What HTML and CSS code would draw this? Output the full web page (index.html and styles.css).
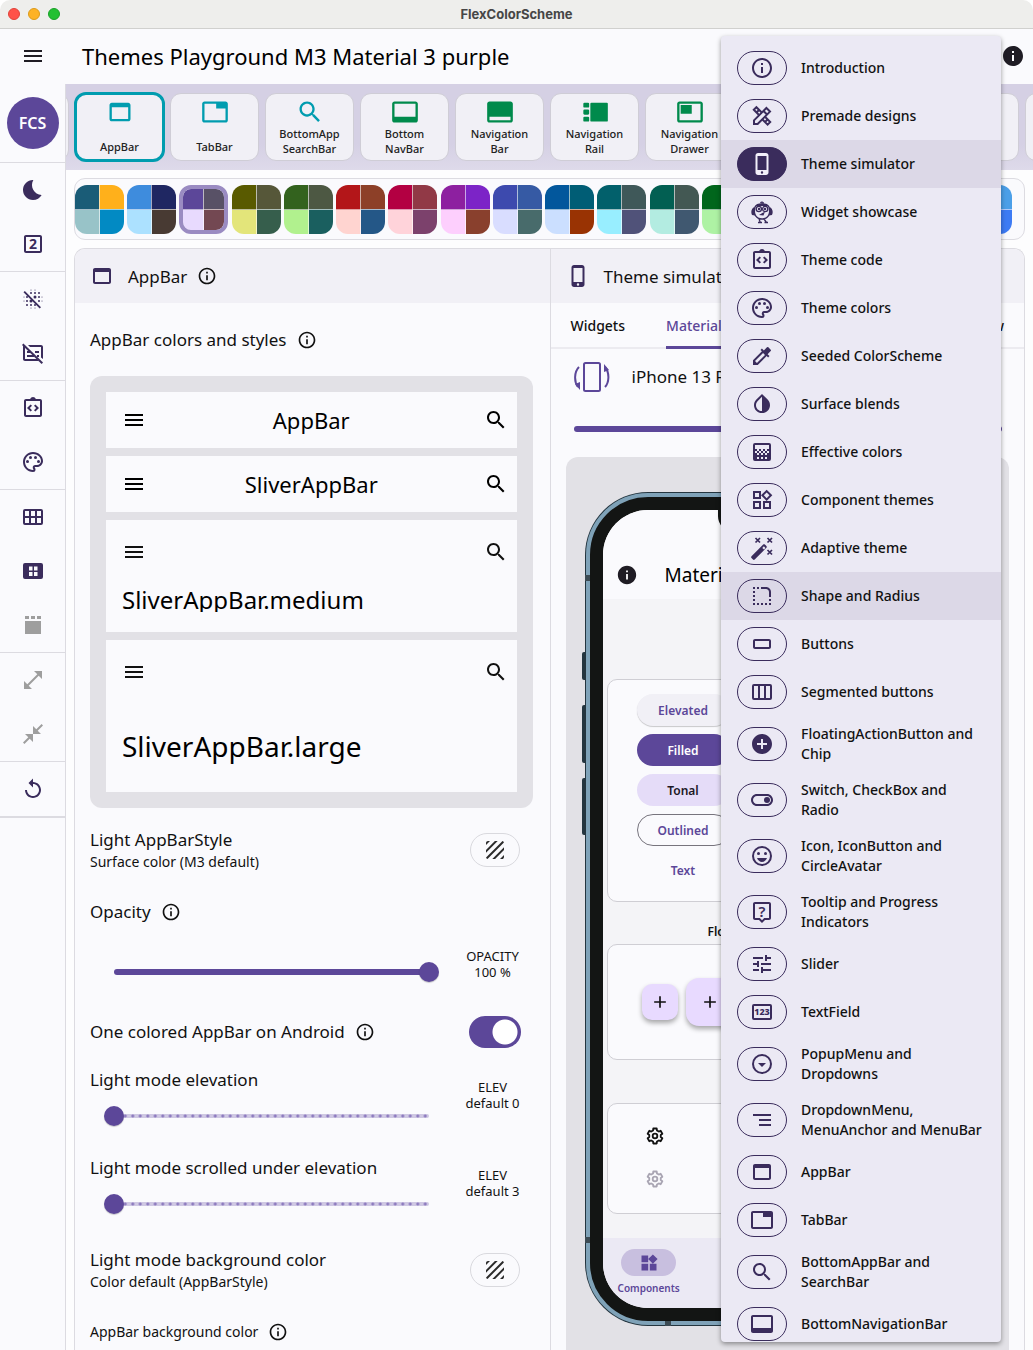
FILE: index.html
```html
<!DOCTYPE html>
<html lang="en">
<head>
<meta charset="utf-8">
<title>FlexColorScheme</title>
<meta name="viewport" content="width=device-width, initial-scale=1">
<link rel="stylesheet" href="styles.css">
</head>
<body>
<svg class="sprite" aria-hidden="true">
  <symbol id="menu" viewBox="0 0 24 24"><path d="M3 18h18v-2H3v2zm0-5h18v-2H3v2zm0-7v2h18V6H3z"/></symbol>
  <symbol id="info" viewBox="0 0 24 24"><path d="M11 7h2v2h-2zm0 4h2v6h-2zm1-9C6.48 2 2 6.48 2 12s4.48 10 10 10 10-4.48 10-10S17.520 2 12 2zm0 18c-4.410 0-8-3.590-8-8s3.590-8 8-8 8 3.590 8 8-3.590 8-8 8z"/></symbol>
  <symbol id="info-fill" viewBox="0 0 24 24"><path d="M12 2C6.480 2 2 6.480 2 12s4.480 10 10 10 10-4.480 10-10S17.520 2 12 2zm1 15h-2v-6h2v6zm0-8h-2V7h2v2z"/></symbol>
  <symbol id="search" viewBox="0 0 24 24"><path d="M15.500 14h-.79l-.28-.27C15.410 12.590 16 11.110 16 9.500 16 5.910 13.090 3 9.500 3S3 5.910 3 9.500 5.910 16 9.500 16c1.610 0 3.090-.59 4.230-1.570l.27.28v.79l5 4.990L20.490 19l-4.990-5zm-6 0C7.010 14 5 11.990 5 9.500S7.010 5 9.500 5 14 7.010 14 9.500 11.990 14 9.500 14z"/></symbol>
  <symbol id="window" viewBox="0 0 24 24"><path d="M19 4H5c-1.110 0-2 .9-2 2v12c0 1.100.89 2 2 2h14c1.100 0 2-.9 2-2V6c0-1.100-.89-2-2-2zm0 14H5V8h14v10z"/></symbol>
  <symbol id="tab" viewBox="0 0 24 24"><path d="M21 3H3c-1.100 0-2 .9-2 2v14c0 1.100.9 2 2 2h18c1.100 0 2-.9 2-2V5c0-1.100-.9-2-2-2zm0 16H3V5h10v4h8v10z"/></symbol>
  <symbol id="bottomnav" viewBox="0 0 24 24"><path d="M21 3H3c-1.100 0-2 .9-2 2v14c0 1.100.9 2 2 2h18c1.100 0 2-.9 2-2V5c0-1.100-.9-2-2-2zm0 13H3V5h18v11z"/></symbol>
  <symbol id="navbar" viewBox="0 0 24 24"><path d="M21 3H3c-1.100 0-2 .9-2 2v14c0 1.100.9 2 2 2h18c1.100 0 2-.9 2-2V5c0-1.100-.9-2-2-2zm0 16H3v-3h18v3z"/></symbol>
  <symbol id="rail" viewBox="0 0 24 24"><rect x="2" y="4" width="5" height="4.200" rx="1"/><rect x="2" y="9.900" width="5" height="4.400" rx="1"/><rect x="2" y="16" width="5" height="4.200" rx="1"/><rect x="8" y="4" width="15" height="16.200" rx="1"/></symbol>
  <symbol id="drawer" viewBox="0 0 24 24"><path d="M21 3H3c-1.100 0-2 .9-2 2v14c0 1.100.9 2 2 2h18c1.100 0 2-.9 2-2V5c0-1.100-.9-2-2-2zm0 16H3V5h18v14z"/><path d="M4 6h9.500v7.500H4z"/></symbol>
  <symbol id="moon" viewBox="0 0 24 24"><path d="M12.340 2.020C6.590 1.820 2 6.420 2 12c0 5.520 4.480 10 10 10 3.710 0 6.930-2.020 8.660-5.020-7.510-.25-12.090-8.430-8.320-14.960z"/></symbol>
  <symbol id="two" viewBox="0 0 24 24"><path d="M19 3H5c-1.100 0-2 .9-2 2v14c0 1.100.9 2 2 2h14c1.100 0 2-.9 2-2V5c0-1.100-.9-2-2-2zm0 16H5V5h14v14z"/><text x="12" y="17" text-anchor="middle" font-size="14" font-weight="700">2</text></symbol>
  <symbol id="blur-off" viewBox="0 0 24 24"><g><circle cx="14" cy="6" r="1"/><circle cx="10" cy="6" r="1"/><circle cx="18" cy="6" r="1"/><circle cx="14" cy="10" r="1.500"/><circle cx="18" cy="10" r="1"/><circle cx="6" cy="10" r="1"/><circle cx="18" cy="14" r="1"/><circle cx="6" cy="14" r="1"/><circle cx="10" cy="14" r="1.500"/><circle cx="6" cy="18" r="1"/><circle cx="10" cy="18" r="1"/><circle cx="14" cy="18" r="1"/><circle cx="10" cy="3" r=".5"/><circle cx="14" cy="3" r=".5"/><circle cx="10" cy="21" r=".5"/><circle cx="14" cy="21" r=".5"/><circle cx="3" cy="10" r=".5"/><circle cx="3" cy="14" r=".5"/><circle cx="21" cy="10" r=".5"/><circle cx="21" cy="14" r=".5"/></g><path d="M2.500 5.300 3.800 4 20 20.200l-1.300 1.300z"/></symbol>
  <symbol id="subtitles-off" viewBox="0 0 24 24"><path d="M7 4h13c1.100 0 2 .9 2 2v12l-2-1.500V6H9zM4 6v12h12l2 2H4c-1.100 0-2-.9-2-2V6c0-1 .4-1.500 1-2z"/><path d="M14 10h4v2h-4zM6 10h3v2H6zM6 14h7v2H6zM16 14h2v2h-2z"/><path d="M1 4 2.400 2.600 22 21.600 20.600 23z"/></symbol>
  <symbol id="code" viewBox="0 0 24 24"><path fill-rule="evenodd" d="M19 3h-4.180C14.400 1.840 13.300 1 12 1s-2.400.84-2.820 2H5c-1.100 0-2 .9-2 2v14c0 1.100.9 2 2 2h14c1.100 0 2-.9 2-2V5c0-1.100-.9-2-2-2zm0 16H5V5h14z"/><path d="M11 14.170 8.830 12 11 9.830 9.590 8.400 6 12l3.590 3.600zM13 14.170 15.170 12 13 9.830l1.410-1.430L18 12l-3.590 3.600z"/></symbol>
  <symbol id="palette" viewBox="0 0 24 24"><path d="M12 22C6.490 22 2 17.510 2 12S6.490 2 12 2s10 4.040 10 9c0 3.310-2.690 6-6 6h-1.770c-.28 0-.5.22-.5.5 0 .12.050.23.130.33.41.47.64 1.060.64 1.670A2.500 2.500 0 0 1 12 22zm0-18c-4.410 0-8 3.590-8 8s3.590 8 8 8c.28 0 .5-.22.5-.5a.54.54 0 0 0-.14-.35c-.41-.46-.63-1.050-.63-1.650a2.500 2.500 0 0 1 2.500-2.500H16c2.210 0 4-1.790 4-4 0-3.860-3.590-7-8-7z"/><circle cx="6.500" cy="11.500" r="1.500"/><circle cx="9.500" cy="7.500" r="1.500"/><circle cx="14.500" cy="7.500" r="1.500"/><circle cx="17.500" cy="11.500" r="1.500"/></symbol>
  <symbol id="grid" viewBox="0 0 24 24"><path fill-rule="evenodd" d="M4 4h16a2 2 0 0 1 2 2v12a2 2 0 0 1-2 2H4a2 2 0 0 1-2-2V6a2 2 0 0 1 2-2zm0 2v5h4V6zm6 0v5h4V6zm6 0v5h4V6zM4 13v5h4v-5zm6 0v5h4v-5zm6 0v5h4v-5z"/></symbol>
  <symbol id="window-grid" viewBox="0 0 24 24"><path fill-rule="evenodd" d="M4 4h16a2 2 0 0 1 2 2v12a2 2 0 0 1-2 2H4a2 2 0 0 1-2-2V6a2 2 0 0 1 2-2zm4 3.500v4h3.500v-4zm5 0v4h3.500v-4zm-5 5.500v4h3.500v-4zm5 0v4h3.500v-4z"/></symbol>
  <symbol id="tabs-block" viewBox="0 0 24 24"><path d="M4 3h4v3H4zM10 3h4v3h-4zM16 3h4v3h-4zM4 8h16v13H4z"/></symbol>
  <symbol id="expand" viewBox="0 0 24 24"><path d="M21 11V3h-8l3.290 3.290-10 10L3 13v8h8l-3.290-3.290 10-10z"/></symbol>
  <symbol id="collapse" viewBox="0 0 24 24"><path d="M22 3.410 16.710 8.700 20 12h-8V4l3.290 3.290L20.590 2 22 3.410zM3.410 22l5.290-5.290L12 20v-8H4l3.290 3.290L2 20.590 3.410 22z"/></symbol>
  <symbol id="replay" viewBox="0 0 24 24"><path d="M12 5V1.500L7.500 6l4.500 4.500V7c3.310 0 6 2.690 6 6s-2.690 6-6 6-6-2.690-6-6H4c0 4.420 3.580 8 8 8s8-3.580 8-8-3.580-8-8-8z"/></symbol>
  <symbol id="design" viewBox="0 0 24 24"><g fill="none" stroke="currentColor" stroke-width="2"><path d="M4 20v-3.600L16.400 4l3.600 3.600L7.600 20zM13.500 7l3.500 3.500"/><path d="m9.500 11.500-5.700-5.700 2.600-2.600 5.600 5.600M14.500 12.300l5.700 5.700-2.600 2.600-5.600-5.600M6.500 8.500l2-2M15.500 17.500l2-2"/></g></symbol>
  <symbol id="phone" viewBox="0 0 24 24"><path d="M16 1H8C6.620 1 5.500 2.120 5.500 3.500v17C5.500 21.880 6.620 23 8 23h8c1.380 0 2.500-1.120 2.500-2.500v-17C18.500 2.120 17.380 1 16 1zm-4 20.700a1.200 1.200 0 1 1 0-2.400 1.200 1.200 0 0 1 0 2.400zm4.500-3.700h-9V4h9v14z"/></symbol>
  <symbol id="mascot" viewBox="0 0 24 24"><g fill="none" stroke="currentColor" stroke-width="1.300"><path d="M5 7C7 3 17 3 19 7c2 7-1 12-7 12S3 14 5 7zM9 19l1.500 4M14 19l2.500 3.500M8 22.500h4M14.500 22.500h3.500M10.500 3c1-1.500 2.500-1 3 .3"/><circle cx="8.800" cy="9" r="2.600"/><circle cx="15.200" cy="9" r="2.600"/></g><path d="M4.500 7c-3 1-4 5-2.500 8l3 .5zM19.500 7c3 1 4 5 2.500 8l-3 .5zM5.500 6c3-3 10-3 13 0zM9 15l6-3.500-1.500 4z"/><circle cx="9" cy="9" r="1.200"/><circle cx="15" cy="9" r="1.200"/></symbol>
  <symbol id="dropper" viewBox="0 0 24 24"><path d="M20.710 5.630l-2.340-2.340a1 1 0 0 0-1.410 0l-3.120 3.120-1.930-1.910-1.410 1.410 1.420 1.420L3 16.250V21h4.750l8.920-8.920 1.420 1.420 1.410-1.410-1.920-1.920 3.120-3.120c.4-.4.4-1.030.01-1.420zM6.920 19 5 17.080l8.060-8.060 1.920 1.920L6.920 19z"/></symbol>
  <symbol id="drop" viewBox="0 0 24 24"><path fill-rule="evenodd" d="M12 2 6.350 7.560C4.900 8.990 4 10.960 4 13.130 4 17.480 7.580 21 12 21s8-3.520 8-7.870c0-2.170-.9-4.140-2.350-5.570zM12 4.810V19c-3.310 0-6-2.630-6-5.870 0-1.560.62-3.030 1.750-4.140z"/></symbol>
  <symbol id="gradient" viewBox="0 0 24 24"><path fill-rule="evenodd" d="M5 3h14a2 2 0 0 1 2 2v14a2 2 0 0 1-2 2H5a2 2 0 0 1-2-2V5a2 2 0 0 1 2-2zm0 2v4h2v2h2V9h2v2h2V9h2v2h2V9h2V5zm0 6v2h2v-2zm4 0v2h2v-2zm4 0v2h2v-2zm4 0v2h2v-2zM7 13v2h2v-2zm4 0v2h2v-2zm4 0v2h2v-2zM7 17v2h2v-2zm4 0v2h2v-2zm4 0v2h2v-2z"/></symbol>
  <symbol id="widgets" viewBox="0 0 24 24"><path fill-rule="evenodd" d="M16.660 4.520l2.830 2.830-2.830 2.830-2.830-2.830zM9 5v4H5V5zM19 15v4h-4v-4zM9 15v4H5v-4zM16.660 1.690 11 7.340 16.660 13l5.660-5.660zM11 3H3v8h8zM21 13h-8v8h8zM11 13H3v8h8z"/></symbol>
  <symbol id="widgets-fill" viewBox="0 0 24 24"><path d="M13 13v8h8v-8h-8zM3 21h8v-8H3v8zM3 3v8h8V3H3zm13.660-1.310L11 7.340 16.660 13l5.660-5.660-5.660-5.650z"/></symbol>
  <symbol id="wand" viewBox="0 0 24 24"><path fill-rule="evenodd" d="m1.500 20.300 11.700-11.700c.5-.5 1.200-.5 1.700 0l1.500 1.500c.5.500.5 1.200 0 1.700L4.700 23.500c-.5.500-1.200.5-1.700 0L1.500 22c-.5-.5-.5-1.200 0-1.700zM12.300 12l1.700 1.600 1.400-1.600-1.500-1.700z"/><path d="m5.500 2 4.500 4.500M10 2 5.500 6.500M17.500 2 22 6.500M22 2l-4.500 4.500M17.500 14l4.500 4.500M22 14l-4.500 4.500" fill="none" stroke="currentColor" stroke-width="1.700"/></symbol>
  <symbol id="corner" viewBox="0 0 24 24"><path d="M19 19h2v2h-2v-2zm0-2h2v-2h-2v2zM3 13h2v-2H3v2zm0 4h2v-2H3v2zm0-8h2V7H3v2zm0-4h2V3H3v2zm4 0h2V3H7v2zm8 16h2v-2h-2v2zm-4 0h2v-2h-2v2zm-4 0h2v-2H7v2zm-4 0h2v-2H3v2zM21 8c0-2.760-2.240-5-5-5h-5v2h5c1.650 0 3 1.350 3 3v5h2V8z"/></symbol>
  <symbol id="button" viewBox="0 0 24 24"><path d="M19 7H5c-1.100 0-2 .9-2 2v6c0 1.100.9 2 2 2h14c1.100 0 2-.9 2-2V9c0-1.100-.9-2-2-2zm0 8H5V9h14v6z"/></symbol>
  <symbol id="segments" viewBox="0 0 24 24"><path fill-rule="evenodd" d="M4 4h16a2 2 0 0 1 2 2v12a2 2 0 0 1-2 2H4a2 2 0 0 1-2-2V6a2 2 0 0 1 2-2zm0 2v12h4V6zm6 0v12h4V6zm6 0v12h4V6z"/></symbol>
  <symbol id="add-circle" viewBox="0 0 24 24"><path d="M12 2C6.480 2 2 6.480 2 12s4.480 10 10 10 10-4.480 10-10S17.520 2 12 2zm5 11h-4v4h-2v-4H7v-2h4V7h2v4h4v2z"/></symbol>
  <symbol id="toggle" viewBox="0 0 24 24"><path d="M17 6H7c-3.310 0-6 2.690-6 6s2.690 6 6 6h10c3.310 0 6-2.690 6-6s-2.690-6-6-6zm0 10H7c-2.210 0-4-1.790-4-4s1.790-4 4-4h10c2.210 0 4 1.790 4 4s-1.790 4-4 4z"/><circle cx="17" cy="12" r="3"/></symbol>
  <symbol id="smile" viewBox="0 0 24 24"><circle cx="12" cy="12" r="9" fill="none" stroke="currentColor" stroke-width="2"/><circle cx="8.500" cy="9.500" r="1.500"/><circle cx="15.500" cy="9.500" r="1.500"/><path d="M7 14h10c-.8 2.300-2.700 4-5 4s-4.200-1.700-5-4z"/></symbol>
  <symbol id="help" viewBox="0 0 24 24"><path fill-rule="evenodd" d="M19 2H5c-1.110 0-2 .9-2 2v14c0 1.100.89 2 2 2h4l3 3 3-3h4c1.100 0 2-.9 2-2V4c0-1.100-.9-2-2-2zm0 16h-4.830L12 20.170 9.830 18H5V4h14z"/><text x="12" y="16.500" text-anchor="middle" font-size="15" font-weight="600">?</text></symbol>
  <symbol id="tune" viewBox="0 0 24 24"><path d="M3 17v2h6v-2H3zM3 5v2h10V5H3zm10 16v-2h8v-2h-8v-2h-2v6h2zM7 9v2H3v2h4v2h2V9H7zm14 4v-2H11v2h10zm-6-4h2V7h4V5h-4V3h-2v6z"/></symbol>
  <symbol id="digits" viewBox="0 0 24 24"><path fill-rule="evenodd" d="M4 4h16a2 2 0 0 1 2 2v12a2 2 0 0 1-2 2H4a2 2 0 0 1-2-2V6a2 2 0 0 1 2-2zm0 2v12h16V6z"/><text x="12" y="15.200" text-anchor="middle" font-size="9" font-weight="800">123</text></symbol>
  <symbol id="dropdown" viewBox="0 0 24 24"><circle cx="12" cy="12" r="9" fill="none" stroke="currentColor" stroke-width="2"/><path d="m12 15 4-4H8z"/></symbol>
  <symbol id="segment" viewBox="0 0 24 24"><path d="M9 18h12v-2H9v2zM3 6v2h18V6H3zm6 7h12v-2H9v2z"/></symbol>
  <symbol id="texture" viewBox="0 0 24 24"><path d="M19.510 3.080 3.080 19.510c.09.34.27.65.51.9.25.24.56.42.9.51L20.930 4.490c-.19-.69-.73-1.230-1.420-1.410zM11.880 3 3 11.880v2.830L14.710 3h-2.830zM5 3c-1.100 0-2 .9-2 2v2l4-4H5zm14 18c.55 0 1.050-.22 1.410-.59.37-.36.59-.86.59-1.410v-2l-4 4h2zm-9.710 0h2.830L21 12.120V9.290L9.290 21z"/></symbol>
  <symbol id="plus" viewBox="0 0 24 24"><path d="M19 13h-6v6h-2v-6H5v-2h6V5h2v6h6v2z"/></symbol>
  <symbol id="gear" viewBox="0 0 24 24"><g fill="none" stroke="currentColor" stroke-width="2.200" stroke-linejoin="round"><path d="M9.610 5.420 9.930 3.040H14.070L14.390 5.420 16.500 6.640 18.730 5.730 20.800 9.310 18.890 10.780V13.220L20.800 14.690 18.730 18.270 16.500 17.360 14.390 18.580 14.070 20.960H9.930L9.610 18.580 7.500 17.360 5.270 18.270 3.200 14.690 5.110 13.220V10.780L3.200 9.310 5.270 5.730 7.500 6.640z"/><circle cx="12" cy="12" r="2.800"/></g></symbol>
  <symbol id="rotate" viewBox="0 0 36 32"><g fill="none" stroke="currentColor" stroke-width="2"><rect x="10" y="2" width="16" height="28" rx="1.500"/><path d="M5 6C0 11 0 21 4 26M31 6c5 6 4 16 0 20"/></g><path d="M6 21v8l-5-6zM30 3v8l5-2z"/></symbol>
</svg>

<div class="app">
  <div class="titlebar">
    <span class="dot red"></span><span class="dot amber"></span><span class="dot green"></span>
    <h1>FlexColorScheme</h1>
  </div>

  <header class="appbar">
    <button class="icon-btn menu-btn" aria-label="Menu"><svg class="i24"><use href="#menu"/></svg></button>
    <h2>Themes Playground M3 Material 3 purple</h2>
    <button class="icon-btn" aria-label="About"><svg class="i24"><use href="#info-fill"/></svg></button>
  </header>

  <div class="body">
    <nav class="rail">
      <div class="avatar-box"><span class="avatar">FCS</span></div>
      <div class="group">
        <button aria-label="Dark mode"><svg class="i24"><use href="#moon"/></svg></button>
        <button aria-label="Material version"><svg class="i24"><use href="#two"/></svg></button>
      </div>
      <div class="group">
        <button aria-label="Blends"><svg class="i24"><use href="#blur-off"/></svg></button>
        <button aria-label="Descriptions"><svg class="i24"><use href="#subtitles-off"/></svg></button>
      </div>
      <div class="group">
        <button aria-label="Theme code"><svg class="i24"><use href="#code"/></svg></button>
        <button aria-label="Theme colors"><svg class="i24"><use href="#palette"/></svg></button>
      </div>
      <div class="group">
        <button aria-label="Grid"><svg class="i24"><use href="#grid"/></svg></button>
        <button aria-label="Panels"><svg class="i24"><use href="#window-grid"/></svg></button>
        <button aria-label="Topics" disabled><svg class="i24"><use href="#tabs-block"/></svg></button>
      </div>
      <div class="group">
        <button aria-label="Expand" disabled><svg class="i24"><use href="#expand"/></svg></button>
        <button aria-label="Collapse" disabled><svg class="i24"><use href="#collapse"/></svg></button>
      </div>
      <div class="group last">
        <button aria-label="Reset"><svg class="i24"><use href="#replay"/></svg></button>
      </div>
    </nav>

    <main class="main">
      <div class="topics">
        <button class="topic" aria-label="Previous"></button>
        <button class="topic teal selected"><svg class="i28"><use href="#window"/></svg><span>AppBar</span></button>
        <button class="topic teal"><svg class="i28"><use href="#tab"/></svg><span>TabBar</span></button>
        <button class="topic teal"><svg class="i28"><use href="#search"/></svg><span>BottomApp<br>SearchBar</span></button>
        <button class="topic"><svg class="i28"><use href="#bottomnav"/></svg><span>Bottom<br>NavBar</span></button>
        <button class="topic"><svg class="i28"><use href="#navbar"/></svg><span>Navigation<br>Bar</span></button>
        <button class="topic"><svg class="i28"><use href="#rail"/></svg><span>Navigation<br>Rail</span></button>
        <button class="topic"><svg class="i28"><use href="#drawer"/></svg><span>Navigation<br>Drawer</span></button>
        <button class="topic" aria-label="Topic"></button>
        <button class="topic" aria-label="Topic"></button>
        <button class="topic" aria-label="Topic"></button>
        <button class="topic" aria-label="Next"></button>
      </div>

      <div class="content">
        <div class="swatches">
          <button class="swatch" aria-label="Scheme 1" style="--a:#1a5c77;--b:#ffb01b;--c:#98c3c8;--d:#028ac3"></button>
          <button class="swatch" aria-label="Scheme 2" style="--a:#3e8cdd;--b:#1f2762;--c:#ace1ff;--d:#483a33"></button>
          <button class="swatch on" aria-label="Scheme 3" style="--a:#5c4799;--b:#585166;--c:#e8dafe;--d:#734852"></button>
          <button class="swatch" aria-label="Scheme 4" style="--a:#595a00;--b:#565739;--c:#e3e57a;--d:#365e4c"></button>
          <button class="swatch" aria-label="Scheme 5" style="--a:#33621e;--b:#4d5843;--c:#b1f18e;--d:#1a5f5f"></button>
          <button class="swatch" aria-label="Scheme 6" style="--a:#b31619;--b:#8d4028;--c:#ffd4d0;--d:#245787"></button>
          <button class="swatch" aria-label="Scheme 7" style="--a:#b30042;--b:#913946;--c:#ffd3da;--d:#7c416c"></button>
          <button class="swatch" aria-label="Scheme 8" style="--a:#8d20a0;--b:#7c24c7;--c:#fdcffd;--d:#89402d"></button>
          <button class="swatch" aria-label="Scheme 9" style="--a:#3d4aae;--b:#365aa4;--c:#d9ddff;--d:#486b6b"></button>
          <button class="swatch" aria-label="Scheme 10" style="--a:#02579c;--b:#005d75;--c:#cbdfff;--d:#993303"></button>
          <button class="swatch" aria-label="Scheme 11" style="--a:#02606b;--b:#3f5859;--c:#98eeff;--d:#505279"></button>
          <button class="swatch" aria-label="Scheme 12" style="--a:#025f52;--b:#435853;--c:#b3ece1;--d:#405870"></button>
          <button class="swatch" aria-label="Scheme 13" style="--a:#01661c;--b:#3f5a3f;--c:#aef2a4;--d:#2c5f62"></button>
          <button class="swatch" aria-label="Scheme 14" style="--a:#8a5000;--b:#705b40;--c:#ffdcbc;--d:#54643d"></button>
          <button class="swatch" aria-label="Scheme 15" style="--a:#5c4799;--b:#585166;--c:#e8dafe;--d:#734852"></button>
          <button class="swatch" aria-label="Scheme 16" style="--a:#02579c;--b:#005d75;--c:#cbdfff;--d:#993303"></button>
          <button class="swatch" aria-label="Scheme 17" style="--a:#33621e;--b:#4d5843;--c:#b1f18e;--d:#1a5f5f"></button>
          <button class="swatch" aria-label="Scheme 18" style="--a:#1d63b8;--b:#4b9fe8;--c:#9cc7f5;--d:#3d7bf4"></button>
        </div>

        <div class="panels">
          <section class="panel left">
            <header class="panel-head">
              <svg class="i24 accent"><use href="#window"/></svg>
              <h3>AppBar</h3>
              <svg class="i20"><use href="#info"/></svg>
            </header>
            <div class="panel-body">
              <div class="line tall"><h4>AppBar colors and styles</h4><svg class="i20"><use href="#info"/></svg></div>
              <div class="preview">
                <div class="bar"><svg class="i24"><use href="#menu"/></svg><span>AppBar</span><svg class="i24"><use href="#search"/></svg></div>
                <div class="bar"><svg class="i24"><use href="#menu"/></svg><span>SliverAppBar</span><svg class="i24"><use href="#search"/></svg></div>
                <div class="bar-large medium">
                  <div class="tools"><svg class="i24"><use href="#menu"/></svg><svg class="i24"><use href="#search"/></svg></div>
                  <p>SliverAppBar.medium</p>
                </div>
                <div class="bar-large large">
                  <div class="tools"><svg class="i24"><use href="#menu"/></svg><svg class="i24"><use href="#search"/></svg></div>
                  <p>SliverAppBar.large</p>
                </div>
              </div>
              <div class="tile">
                <div><h4>Light AppBarStyle</h4><p>Surface color (M3 default)</p></div>
                <button class="pill" aria-label="Light AppBarStyle"><svg class="i24"><use href="#texture"/></svg></button>
              </div>
              <div class="line"><h4><label for="opacity">Opacity</label></h4><svg class="i20"><use href="#info"/></svg></div>
              <div class="slide-row only">
                <div class="slider full"><input id="opacity" type="range" min="0" max="100" value="100"></div>
                <p class="value">OPACITY<br>100 %</p>
              </div>
              <div class="line">
                <h4><label for="onecolor">One colored AppBar on Android</label></h4><svg class="i20"><use href="#info"/></svg>
                <input id="onecolor" class="switch" type="checkbox" role="switch" checked>
              </div>
              <div class="slide-row">
                <div><h4><label for="elev">Light mode elevation</label></h4>
                <div class="slider ticks"><input id="elev" type="range" min="-1" max="40" value="-1"></div></div>
                <p class="value">ELEV<br>default 0</p>
              </div>
              <div class="slide-row">
                <div><h4><label for="under">Light mode scrolled under elevation</label></h4>
                <div class="slider ticks"><input id="under" type="range" min="-1" max="40" value="-1"></div></div>
                <p class="value">ELEV<br>default 3</p>
              </div>
              <div class="tile">
                <div><h4>Light mode background color</h4><p>Color default (AppBarStyle)</p></div>
                <button class="pill" aria-label="Light mode background color"><svg class="i24"><use href="#texture"/></svg></button>
              </div>
              <div class="line small"><h4>AppBar background color</h4><svg class="i20"><use href="#info"/></svg></div>
            </div>
          </section>

          <section class="panel right">
            <header class="panel-head">
              <svg class="i24 accent"><use href="#phone"/></svg>
              <h3>Theme simulator</h3>
            </header>
            <div class="tabs">
              <a href="#widgets-tab">Widgets</a>
              <a href="#material-tab" class="active">Material demo</a>
              <a href="#view-tab">View</a>
            </div>
            <div class="device"><svg class="rotate"><use href="#rotate"/></svg><h4>iPhone 13 Pro</h4></div>
            <div class="size-bar"></div>
            <div class="stage">
              <div class="phone">
                <span class="key k1"></span><span class="key k2"></span><span class="key k3"></span>
                <span class="band b1"></span><span class="band b2"></span><span class="band b3"></span>
                <div class="bezel">
                  <div class="screen">
                    <span class="notch"></span>
                    <div class="screen-head"><svg class="i22"><use href="#info-fill"/></svg><h5>Material 3</h5></div>
                    <div class="screen-body">
                      <div class="card buttons">
                        <button class="elevated">Elevated</button>
                        <button class="filled">Filled</button>
                        <button class="tonal">Tonal</button>
                        <button class="outlined">Outlined</button>
                        <button class="text">Text</button>
                      </div>
                      <p class="caption">FloatingActionButton</p>
                      <div class="card fabs">
                        <button class="fab" aria-label="Add small"><svg class="i20"><use href="#plus"/></svg></button>
                        <button class="fab big" aria-label="Add"><svg class="i20"><use href="#plus"/></svg></button>
                      </div>
                      <div class="card gears">
                        <svg class="i20"><use href="#gear"/></svg>
                        <svg class="i20 off"><use href="#gear"/></svg>
                      </div>
                    </div>
                    <div class="screen-nav">
                      <a href="#components"><span><svg class="i20"><use href="#widgets-fill"/></svg></span>Components</a>
                    </div>
                  </div>
                </div>
              </div>
            </div>
          </section>
        </div>
      </div>
    </main>
  </div>

  <div class="menu" role="menu">
    <button role="menuitem"><span class="badge"><svg class="i24"><use href="#info"/></svg></span><span>Introduction</span></button>
    <button role="menuitem"><span class="badge"><svg class="i24"><use href="#design"/></svg></span><span>Premade designs</span></button>
    <button role="menuitem" class="hl current"><span class="badge"><svg class="i24"><use href="#phone"/></svg></span><span>Theme simulator</span></button>
    <button role="menuitem"><span class="badge"><svg class="i24"><use href="#mascot"/></svg></span><span>Widget showcase</span></button>
    <button role="menuitem"><span class="badge"><svg class="i24"><use href="#code"/></svg></span><span>Theme code</span></button>
    <button role="menuitem"><span class="badge"><svg class="i24"><use href="#palette"/></svg></span><span>Theme colors</span></button>
    <button role="menuitem"><span class="badge"><svg class="i24"><use href="#dropper"/></svg></span><span>Seeded ColorScheme</span></button>
    <button role="menuitem"><span class="badge"><svg class="i24"><use href="#drop"/></svg></span><span>Surface blends</span></button>
    <button role="menuitem"><span class="badge"><svg class="i24"><use href="#gradient"/></svg></span><span>Effective colors</span></button>
    <button role="menuitem"><span class="badge"><svg class="i24"><use href="#widgets"/></svg></span><span>Component themes</span></button>
    <button role="menuitem"><span class="badge"><svg class="i24"><use href="#wand"/></svg></span><span>Adaptive theme</span></button>
    <button role="menuitem" class="hl"><span class="badge"><svg class="i24"><use href="#corner"/></svg></span><span>Shape and Radius</span></button>
    <button role="menuitem"><span class="badge"><svg class="i24"><use href="#button"/></svg></span><span>Buttons</span></button>
    <button role="menuitem"><span class="badge"><svg class="i24"><use href="#segments"/></svg></span><span>Segmented buttons</span></button>
    <button role="menuitem"><span class="badge"><svg class="i24"><use href="#add-circle"/></svg></span><span>FloatingActionButton and Chip</span></button>
    <button role="menuitem"><span class="badge"><svg class="i24"><use href="#toggle"/></svg></span><span>Switch, CheckBox and Radio</span></button>
    <button role="menuitem"><span class="badge"><svg class="i24"><use href="#smile"/></svg></span><span>Icon, IconButton and CircleAvatar</span></button>
    <button role="menuitem"><span class="badge"><svg class="i24"><use href="#help"/></svg></span><span>Tooltip and Progress Indicators</span></button>
    <button role="menuitem"><span class="badge"><svg class="i24"><use href="#tune"/></svg></span><span>Slider</span></button>
    <button role="menuitem"><span class="badge"><svg class="i24"><use href="#digits"/></svg></span><span>TextField</span></button>
    <button role="menuitem"><span class="badge"><svg class="i24"><use href="#dropdown"/></svg></span><span>PopupMenu and<br>Dropdowns</span></button>
    <button role="menuitem"><span class="badge"><svg class="i24"><use href="#segment"/></svg></span><span>DropdownMenu,<br>MenuAnchor and MenuBar</span></button>
    <button role="menuitem"><span class="badge"><svg class="i24"><use href="#window"/></svg></span><span>AppBar</span></button>
    <button role="menuitem"><span class="badge"><svg class="i24"><use href="#tab"/></svg></span><span>TabBar</span></button>
    <button role="menuitem"><span class="badge"><svg class="i24"><use href="#search"/></svg></span><span>BottomAppBar and<br>SearchBar</span></button>
    <button role="menuitem"><span class="badge"><svg class="i24"><use href="#bottomnav"/></svg></span><span>BottomNavigationBar</span></button>
  </div>
</div>
</body>
</html>
```
FILE: styles.css
```css
:root {
  --purple: #5c4799;
  --dark: #3a2c5c;
  --ink: #111;
  --surface: #fafafd;
  --line: #dcdbe1;
  --stage: #e2e1e6;
}
* { box-sizing: border-box; margin: 0; }
body {
  font-family: "Noto Sans", sans-serif;
  color: var(--ink);
  background: #fff;
}
button { font: inherit; color: inherit; border: 0; background: none; padding: 0; }
a { color: inherit; text-decoration: none; }
h1, h2, h3, h4, h5 { font-weight: 400; }
svg { fill: currentColor; flex: none; display: block; }
.sprite { display: none; }
.i20 { width: 20px; height: 20px; }
.i22 { width: 22px; height: 22px; }
.i24 { width: 24px; height: 24px; }
.i28 { width: 28px; height: 28px; }
.accent { color: var(--dark); }

.app {
  position: relative;
  height: 100vh;
  overflow: hidden;
  display: flex;
  flex-direction: column;
  background: #fdfdfe;
  border-radius: 10px 10px 0 0;
}

/* Window frame */
.titlebar {
  flex: none;
  height: 29px;
  padding: 0 8px;
  display: flex;
  align-items: center;
  gap: 8px;
  background: #eeeeec;
  border-bottom: 1px solid #d0d0ce;
}
.titlebar h1 {
  flex: 1;
  margin-right: 60px;
  text-align: center;
  font: 700 13px "Inter", sans-serif;
  color: #464646;
}
.dot { width: 12px; height: 12px; border-radius: 50%; border: 1px solid; }
.red { background: #ff5249; border-color: #e0433a; }
.amber { background: #fdb225; border-color: #dc9a1a; }
.green { background: #22c032; border-color: #1aa128; }

.appbar {
  flex: none;
  height: 55px;
  display: flex;
  align-items: center;
  background: var(--surface);
  padding: 0 8px 2px 0;
}
.appbar h2 { flex: 1; padding-left: 16px; font-size: 22px; color: #000; }
.menu-btn { width: 66px; }
.icon-btn { display: flex; justify-content: center; color: #1f1c24; }

.body { flex: 1; min-height: 0; display: flex; }

/* Side rail */
.rail {
  flex: none;
  width: 66px;
  background: var(--surface);
  border-right: 1px solid var(--line);
  color: var(--dark);
}
.avatar-box {
  height: 79px;
  display: flex;
  align-items: center;
  justify-content: center;
  border-bottom: 1px solid var(--line);
}
.avatar {
  width: 52px;
  height: 52px;
  border-radius: 50%;
  background: var(--purple);
  color: #fff;
  font-size: 16px;
  font-weight: 600;
  line-height: 52px;
  text-align: center;
}
.group { border-bottom: 1px solid var(--line); }
.group.last { border-bottom-width: 2px; }
.group button {
  width: 100%;
  height: 54px;
  display: flex;
  align-items: center;
  justify-content: center;
}
.group button:disabled { color: #9e9e9e; }

.main { flex: 1; min-width: 0; display: flex; flex-direction: column; }

/* Topic cards */
.topics {
  flex: none;
  height: 86px;
  padding: 9px 0;
  display: flex;
  gap: 6px;
  overflow: hidden;
  background: linear-gradient(#d5d0e4 70%, #dedaea);
}
.topic {
  flex: none;
  width: 89px;
  height: 68px;
  padding: 4px 0 6px;
  display: flex;
  flex-direction: column;
  justify-content: space-between;
  align-items: center;
  border: 1px solid #cfcdd6;
  border-radius: 11px;
  background: #f1f0f6;
  color: #008a4c;
}
.topic:first-child { margin-left: -86px; }
.topic.teal { color: #009caf; }
.topic.selected { outline: 3px solid #009caf; outline-offset: -2px; }
.topic span { color: #222; font-size: 11px; font-weight: 500; line-height: 15px; text-align: center; }

.content { flex: 1; min-height: 0; padding: 8px 8px 0; display: flex; flex-direction: column; gap: 8px; }

.swatches {
  flex: none;
  height: 62px;
  padding: 1px 12px 0 0;
  display: flex;
  align-items: center;
  justify-content: space-between;
  border: 1px solid var(--line);
  border-radius: 11px;
  background: var(--surface);
}
.swatch {
  width: 49px;
  height: 49px;
  border-radius: 12px;
  background:
    linear-gradient(#ffffff99, #ffffff99) center / 1px 100% no-repeat,
    linear-gradient(#ffffff99, #ffffff99) center / 100% 1px no-repeat,
    conic-gradient(var(--b) 25%, var(--d) 0 50%, var(--c) 0 75%, var(--a) 0);
}
.swatch.on { border: 4px solid #9a8bc2; background-origin: padding-box; background-clip: padding-box; }

/* Panels */
.panels { flex: 1; min-height: 0; display: grid; grid-template-columns: 1fr 1fr; }
.panel {
  min-width: 0;
  overflow: hidden;
  background: var(--surface);
  border: 1px solid var(--line);
  border-bottom: 0;
}
.left { border-radius: 11px 0 0 0; border-right: 0; }
.right { border-radius: 0 11px 0 0; }
.panel-head {
  height: 54px;
  padding: 0 15px;
  display: flex;
  align-items: center;
  background: #f1f0f6;
}
.panel-head h3 { font-size: 17px; margin: 0 10px 0 14px; }
.panel-body { padding: 0 17px 0 15px; }
h4 { font-size: 17px; line-height: 24px; }

.line { height: 48px; display: flex; align-items: center; gap: 10px; }
.line.tall { height: 73px; }
.line.small h4 { font-size: 14px; }

.preview {
  margin-bottom: 4px;
  padding: 16px;
  display: grid;
  gap: 8px;
  border-radius: 12px;
  background: var(--stage);
}
.bar, .bar-large { background: var(--surface); }
.bar { height: 56px; padding: 0 9px 0 16px; display: flex; align-items: center; font-size: 22px; color: #000; }
.bar span { flex: 1; padding-right: 7px; text-align: center; line-height: 56px; }
.bar-large { display: flex; flex-direction: column; justify-content: space-between; padding: 20px 9px 16px 16px; }
.tools { display: flex; justify-content: space-between; }
.medium { height: 112px; }
.large { height: 152px; padding-bottom: 27px; }
.bar-large p { color: #000; overflow: hidden; }
.medium p { font-size: 24px; height: 28px; line-height: 32px; margin-bottom: 4px; }
.large p { font-size: 28px; line-height: 38px; }

.tile {
  height: 76px;
  padding-right: 13px;
  display: flex;
  align-items: center;
  justify-content: space-between;
}
.tile p { font-size: 14px; line-height: 20px; }
.pill {
  width: 50px;
  height: 34px;
  display: flex;
  align-items: center;
  justify-content: center;
  border: 1px solid #d9d9de;
  border-radius: 17px;
  color: #2b2b2b;
}

.slide-row {
  height: 88px;
  padding: 12px 12px 0 0;
  display: grid;
  grid-template-columns: 1fr 56px;
  column-gap: 26px;
}
.slide-row.only { height: 72px; }
.value { padding-top: 11px; font-size: 13px; line-height: 16px; text-align: center; white-space: nowrap; }
.only .value { padding-top: 0; }
.slider { display: grid; align-items: center; height: 48px; margin-left: 14px; }
.slider::before {
  content: "";
  grid-area: 1 / 1;
  height: 4px;
  margin: 0 10px;
  border-radius: 3px;
  background: radial-gradient(circle, #8d7bbf 1px, transparent 2px) 0 0 / calc(100% / 42) 4px, #cfc8e3;
}
.slider.full::before { height: 6px; background: var(--purple); }
.slider input {
  grid-area: 1 / 1;
  appearance: none;
  width: 100%;
  height: 20px;
  margin: 0;
  background: none;
}
.slider input::-webkit-slider-thumb {
  appearance: none;
  width: 20px;
  height: 20px;
  border-radius: 50%;
  background: var(--purple);
  box-shadow: 0 1px 1px #0003;
}
.switch {
  appearance: none;
  width: 52px;
  height: 32px;
  margin: 0 12px 0 auto;
  border-radius: 16px;
  background: radial-gradient(circle at 36px 16px, #fff 12px, var(--purple) 13px);
}

/* Simulator */
.tabs {
  height: 46px;
  padding: 0 20px;
  display: flex;
  gap: 41px;
  border-bottom: 2px solid #ecebf0;
  font-size: 14px;
  font-weight: 500;
  line-height: 45px;
}
.tabs a:last-child { margin-left: auto; }
.tabs .active { margin-bottom: -2px; color: var(--purple); border-bottom: 3px solid var(--purple); }
.device { height: 56px; padding-left: 23px; display: flex; align-items: center; gap: 22px; }
.rotate { width: 36px; height: 32px; color: var(--purple); }
.size-bar { height: 6px; margin: 21px 22px 25px 23px; border-radius: 3px; background: var(--purple); }
.stage {
  margin: 0 15px;
  padding: 35px 19px;
  min-height: 900px;
  border-radius: 12px;
  background: var(--stage);
}
.phone {
  position: relative;
  height: 834px;
  padding: 1px;
  border-radius: 63px;
  background: #24353f;
}
.bezel { height: 100%; padding: 13px; border: 4px solid #7fa2b8; border-radius: 62px; background: #131514; }
.screen {
  position: relative;
  height: 100%;
  display: flex;
  flex-direction: column;
  overflow: hidden;
  border-radius: 45px;
  background: #f4f4f7;
}
.notch {
  position: absolute;
  top: -8px;
  left: 115px;
  right: 115px;
  height: 30px;
  border-radius: 0 0 16px 16px;
  background: #131514;
}
/* Keys and antenna bands sit on the rim of the device */
.key { position: absolute; left: -3px; width: 3px; border-radius: 2px 0 0 2px; background: #24353f; }
.k1 { top: 160px; height: 28px; }
.k2 { top: 213px; height: 58px; }
.k3 { top: 286px; height: 57px; }
.band { position: absolute; z-index: 1; background: #3c4b54; }
.b1 { left: 0; top: 83px; width: 5px; height: 6px; }
.b2 { left: 0; bottom: 83px; width: 5px; height: 6px; }
.b3 { left: 80px; bottom: 0; width: 6px; height: 5px; }

.screen-head {
  height: 89px;
  padding: 40px 0 0 13px;
  display: flex;
  align-items: center;
  gap: 27px;
  background: var(--surface);
  color: #1f1c24;
}
.screen-head h5 { font-size: 19px; color: #000; }
.screen-body { flex: 1; padding: 80px 4px 0; }
.card { border: 1px solid #cfced4; border-radius: 10px; background: var(--surface); }
.buttons { height: 223px; padding: 14px 29px; display: grid; grid-template-columns: 93px; gap: 8px; align-content: start; }
.buttons button { height: 32px; border-radius: 16px; font-size: 12px; font-weight: 600; color: var(--purple); }
.buttons .elevated { background: #f1f0f6; box-shadow: 0 1px 1px #0003; }
.buttons .filled { background: var(--purple); color: #fff; }
.buttons .tonal { background: #e5dcf8; color: #1c1825; }
.buttons .outlined { border: 1px solid #77747d; }
.caption { height: 42px; padding-top: 19px; font-size: 12px; font-weight: 600; line-height: 22px; padding-left: 101px; }
.fabs { height: 116px; padding-left: 34px; display: flex; align-items: center; gap: 8px; }
.fab {
  width: 36px;
  height: 36px;
  display: flex;
  align-items: center;
  justify-content: center;
  border-radius: 10px;
  background: #e8daff;
  box-shadow: 0 3px 5px #0005;
}
.fab.big { width: 48px; height: 48px; border-radius: 13px; }
.gears { height: 111px; margin-top: 43px; padding: 22px 37px; display: grid; align-content: start; gap: 23px; color: #111; }
.gears .off { color: #a9a5b3; }
.screen-nav { height: 70px; padding: 11px 15px; background: #ebe9f4; }
.screen-nav a {
  display: inline-flex;
  flex-direction: column;
  align-items: center;
  gap: 4px;
  color: var(--purple);
  font-size: 10px;
  font-weight: 600;
  line-height: 16px;
}
.screen-nav span { width: 55px; height: 27px; border-radius: 14px; display: flex; align-items: center; justify-content: center; background: #c8bfdf; }

/* Popup menu over the page */
.menu {
  position: absolute;
  top: 36px;
  right: 32px;
  bottom: 8px;
  width: 280px;
  padding-top: 8px;
  overflow: hidden;
  border-radius: 4px;
  background: #ebe9f4;
  box-shadow: 0 2px 5px #0006;
}
.menu button {
  width: 100%;
  min-height: 48px;
  padding: 7px 16px;
  display: flex;
  gap: 14px;
  align-items: center;
  font-size: 14px;
  font-weight: 500;
  line-height: 20px;
  text-align: left;
}
.menu button:has(br), .menu button:nth-child(n+15):nth-child(-n+18) { min-height: 56px; }
.badge {
  flex: none;
  width: 50px;
  height: 34px;
  display: flex;
  align-items: center;
  justify-content: center;
  border: 1px solid var(--dark);
  border-radius: 17px;
  color: var(--dark);
}
.menu .hl { background: #dcd8e7; }
.menu .current .badge { background: var(--dark); color: #f3f0fa; }
```
